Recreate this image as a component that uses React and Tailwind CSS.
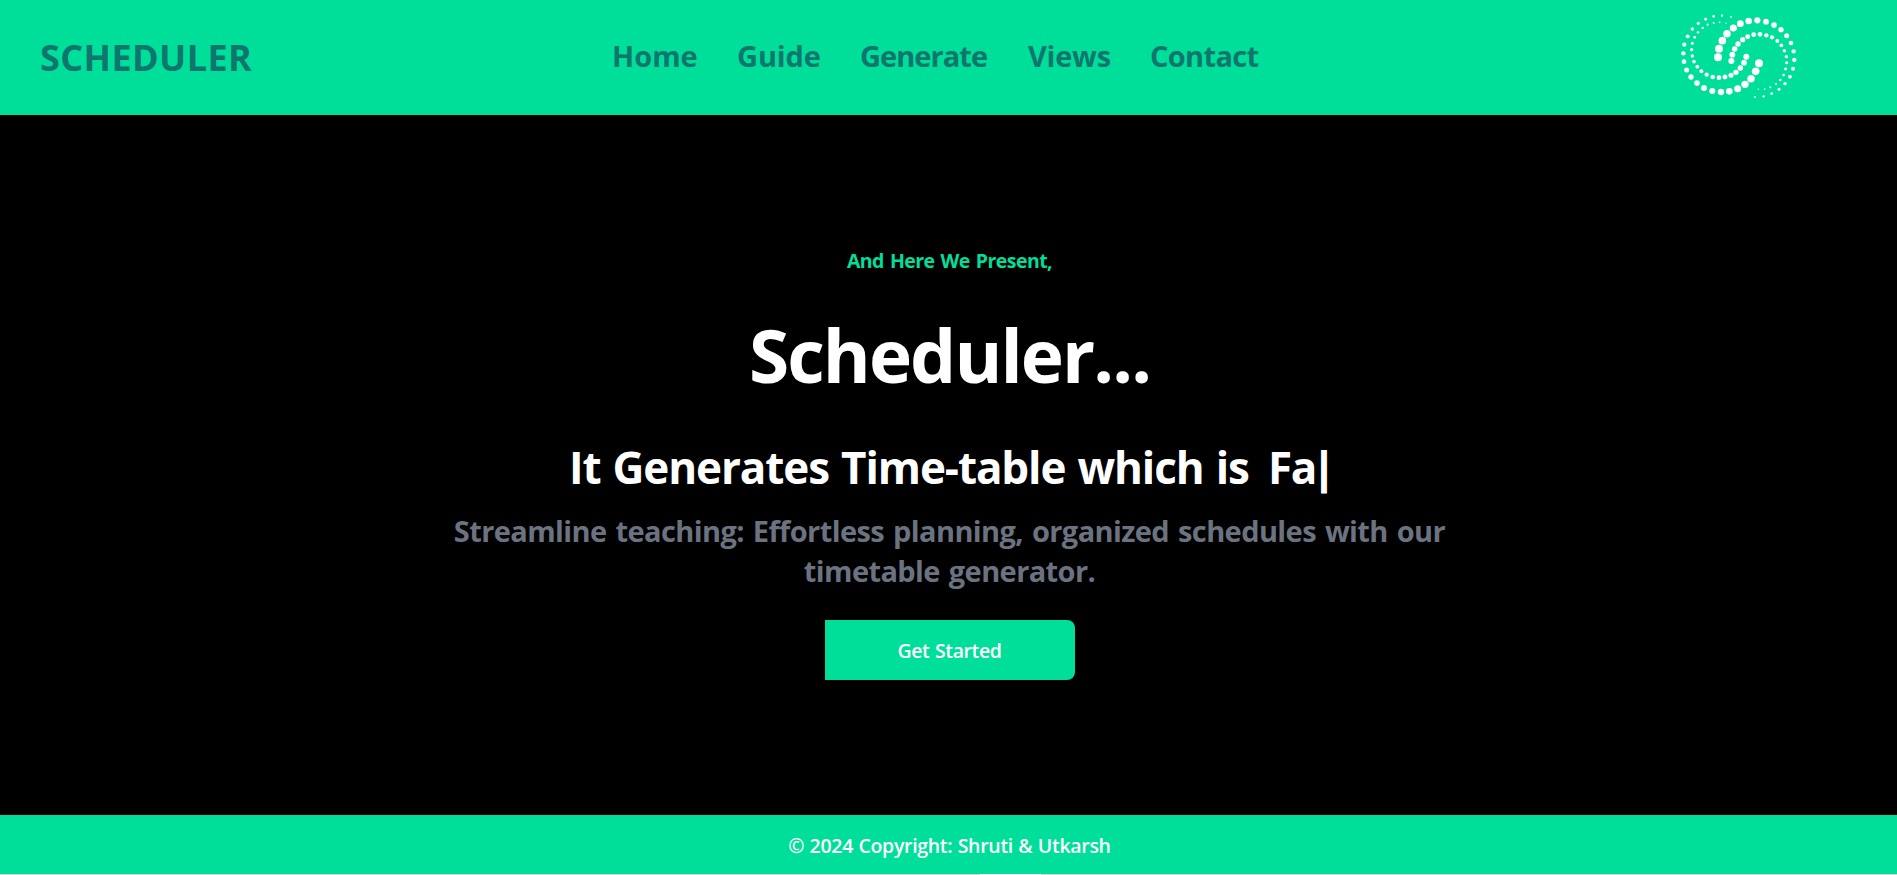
import React from 'react';

const NAV = [
  { label: 'Home', cls: 'w-[125px]' },
  { label: 'Guide', cls: 'w-[123px] tracking-[-0.1px]' },
  { label: 'Generate', cls: 'w-[168px] tracking-[-0.94px]' },
  { label: 'Views', cls: 'w-[122px] tracking-[-0.25px]' },
  { label: 'Contact', cls: 'w-[112px] tracking-[-0.67px]' },
];

// Each dot is [cx, cy, r]
const DOTS = [
  // outer arc, upper right
  [144, 157, 12], [147, 131, 11.8], [157, 107, 11.5], [171, 86, 11.2], [190, 69, 10.8], [211, 56, 10.3], [236, 48, 9.8],
  [262, 46, 9.3], [288, 50, 8.8], [312, 60, 8.5], [333, 74, 8], [350, 92, 7.5], [363, 114, 7], [371, 139, 6.5],
  [373, 165, 6.5], [369, 191, 6], [360, 215, 5.5], [345, 236, 5], [327, 253, 4.5], [305, 266, 4], [281, 274, 3.6], [255, 276, 3],
  // inner arc, upper right
  [184, 168, 9], [187, 149, 8.8], [194, 132, 8.3], [204, 117, 8], [218, 104, 7.8], [233, 95, 7.4], [251, 89, 7],
  [270, 88, 7], [289, 91, 6.6], [306, 97, 6.2], [322, 108, 5.8], [334, 121, 5.6], [343, 137, 5.2], [349, 155, 5],
  [350, 173, 4.6], [347, 192, 4.4], [341, 210, 4], [331, 225, 3.6], [318, 237, 3.2], [301, 247, 3], [284, 252, 2.6], [265, 253, 2.2],
  // outer arc, lower left
  [267, 175, 12], [257, 199, 11.5], [243, 221, 11.2], [225, 238, 11], [203, 251, 10.5], [178, 259, 10], [153, 261, 9.5],
  [127, 258, 9], [102, 249, 8.8], [81, 234, 8.5], [63, 216, 8], [50, 195, 7.5], [42, 170, 7], [40, 145, 6.6],
  [43, 119, 6.3], [53, 94, 5.8], [67, 72, 5.3], [85, 55, 4.8], [107, 43, 4.4], [131, 34, 4], [156, 32, 3.5], [183, 35, 3],
  // inner arc, lower left
  [229, 155, 9], [222, 173, 8.6], [211, 189, 8.2], [198, 202, 8], [183, 211, 7.6], [165, 216, 7.4], [147, 218, 7.2],
  [128, 216, 6.8], [110, 209, 6.4], [94, 199, 6], [82, 185, 5.8], [72, 170, 5.4], [67, 153, 5.2], [65, 134, 4.8],
  [67, 115, 4.5], [74, 97, 4.1], [84, 82, 3.7], [98, 69, 3.5], [113, 59, 3.2], [131, 54, 3], [149, 52, 2.6], [168, 55, 2.2],
];

function Logo() {
  return (
    <svg width="140" height="105" viewBox="0 0 420 315" fill="white" aria-hidden="true">
      {DOTS.map(([cx, cy, r]) => (
        <circle key={`${cx}-${cy}`} cx={cx} cy={cy} r={r} />
      ))}
    </svg>
  );
}

export default function App() {
  return (
    <div className="flex h-[875px] w-full flex-col overflow-hidden bg-black font-['Open_Sans','Noto_Sans',sans-serif] font-bold">
      <header className="flex h-[115px] shrink-0 items-center justify-between bg-[#00df9a] pr-[87px] pl-10 text-[#0f766e]">
        <div className="w-[572px] pt-px text-4xl tracking-[0.4px]">SCHEDULER</div>
        <nav className="flex-1">
          <ul className="flex pb-[3px] text-[29px] leading-10">
            {NAV.map(({ label, cls }) => (
              <li key={label} className={cls}>{label}</li>
            ))}
          </ul>
        </nav>
        <Logo />
      </header>

      <main className="flex h-[700px] shrink-0 flex-col items-center pt-[132px] pl-0.5 text-center text-white">
        <p className="text-[19.5px] leading-7 tracking-[-0.55px] text-[#00df9a] [word-spacing:1.5px]">And Here We Present,</p>
        <h1 className="mt-10 text-[73px] leading-[80px] tracking-[-1.9px]">Scheduler...</h1>
        <div className="mt-12 flex w-[761px] text-[44px] leading-[48px] whitespace-pre">
          <p className="w-[699px] shrink-0 text-left tracking-[-1.1px] [word-spacing:1.8px]">It Generates Time-table which is</p>
          <span className="tracking-[-1.5px]">Fa<span className="-ml-[3px] font-extrabold">|</span></span>
        </div>
        <p className="mt-5 w-[1010px] text-[29px] leading-10 tracking-[-0.6px] text-[#6b7280] [word-spacing:2px]">
          Streamline teaching: Effortless planning, organized schedules with our timetable generator.
        </p>
        <button className="mt-[29px] h-[60px] w-[250px] rounded-r-lg bg-[#00df9a] pt-0.5 text-[19.5px] font-semibold tracking-[-0.4px] [word-spacing:1px]">
          Get Started
        </button>
      </main>

      <footer className="flex h-[59px] shrink-0 items-center justify-center bg-[#00df9a] pt-[3px] pl-0.5 text-[19.5px] font-semibold tracking-[-0.3px] text-white [word-spacing:0.6px]">
        © 2024 Copyright: Shruti &amp; Utkarsh
      </footer>
      <div className="flex h-px shrink-0 bg-[#d4d4d4]">
        <div className="ml-[980px] w-[61px] bg-[#f5f5f5]" />
      </div>
    </div>
  );
}
